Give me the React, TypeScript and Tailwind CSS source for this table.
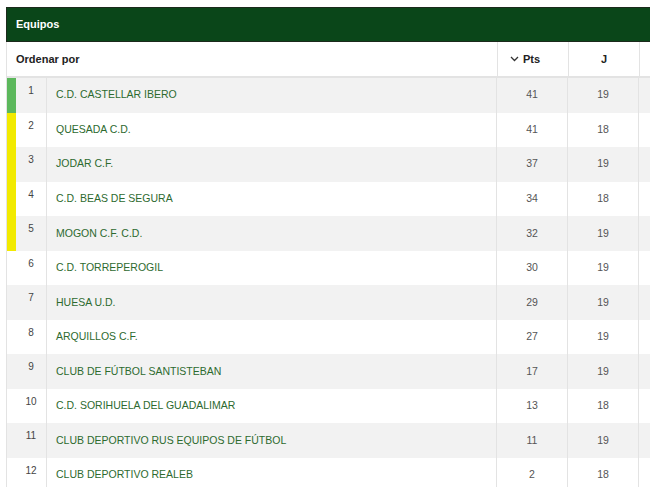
const rows = [
  { pos: 1, name: 'C.D. CASTELLAR IBERO', pts: 41, j: 19, mark: 'bg-[#5cb85c]' },
  { pos: 2, name: 'QUESADA C.D.', pts: 41, j: 18, mark: 'bg-[#f2ea00]' },
  { pos: 3, name: 'JODAR C.F.', pts: 37, j: 19, mark: 'bg-[#f2ea00]' },
  { pos: 4, name: 'C.D. BEAS DE SEGURA', pts: 34, j: 18, mark: 'bg-[#f2ea00]' },
  { pos: 5, name: 'MOGON C.F. C.D.', pts: 32, j: 19, mark: 'bg-[#f2ea00]' },
  { pos: 6, name: 'C.D. TORREPEROGIL', pts: 30, j: 19, mark: '' },
  { pos: 7, name: 'HUESA U.D.', pts: 29, j: 19, mark: '' },
  { pos: 8, name: 'ARQUILLOS C.F.', pts: 27, j: 19, mark: '' },
  { pos: 9, name: 'CLUB DE FÚTBOL SANTISTEBAN', pts: 17, j: 19, mark: '' },
  { pos: 10, name: 'C.D. SORIHUELA DEL GUADALIMAR', pts: 13, j: 18, mark: '' },
  { pos: 11, name: 'CLUB DEPORTIVO RUS EQUIPOS DE FÚTBOL', pts: 11, j: 19, mark: '' },
  { pos: 12, name: 'CLUB DEPORTIVO REALEB', pts: 2, j: 18, mark: '' },
]

export default function App() {
  return (
    <div className="h-[487px] w-[650px] overflow-hidden bg-white pl-[6px] pt-[7px] font-['Liberation_Sans',Arial,sans-serif]">
      <div className="w-[720px]">
        <div className="flex h-[35px] items-center border border-[#1c2a1c] bg-[#0a4619] pl-[9px] text-[11px] font-bold text-white">
          Equipos
        </div>

        <div className="flex h-[36px] border-b-2 border-l border-[#e3e3e3] text-[11px] font-bold text-[#222]">
          <div className="flex w-[490px] items-center pl-[9px]">Ordenar por</div>
          <div className="flex w-[71px] items-center justify-center gap-[4px] border-l border-[#e3e3e3] pr-[16px]">
            <svg width="9" height="6" viewBox="0 0 9 6" fill="none" stroke="#333" strokeWidth="1.3">
              <path d="M1 1l3.5 3.5L8 1" />
            </svg>
            Pts
          </div>
          <div className="flex w-[71px] items-center justify-center border-l border-[#e3e3e3]">J</div>
          <div className="w-[71px] border-l border-[#e3e3e3]" />
        </div>

        {rows.map((r, i) => (
          <div
            key={r.pos}
            className={`flex h-[34.55px] text-[10.5px] ${i % 2 === 0 ? 'bg-[#f2f2f2]' : 'bg-white'}`}
          >
            <div className={`w-[10px] border-l border-[#e3e3e3] ${r.mark}`} />
            <div className="w-[31px] border-r border-[#e3e3e3] pt-[5px] text-center text-[10px] text-[#444]">
              {r.pos}
            </div>
            <div className="flex w-[449px] items-center pl-[9px] text-[#2d6a2f]">{r.name}</div>
            <div className="flex w-[71px] items-center justify-center border-l border-[#e3e3e3] text-[#555]">
              {r.pts}
            </div>
            <div className="flex w-[71px] items-center justify-center border-l border-[#e3e3e3] text-[#555]">
              {r.j}
            </div>
            <div className="w-[71px] border-l border-[#e3e3e3]" />
          </div>
        ))}
      </div>
    </div>
  )
}
